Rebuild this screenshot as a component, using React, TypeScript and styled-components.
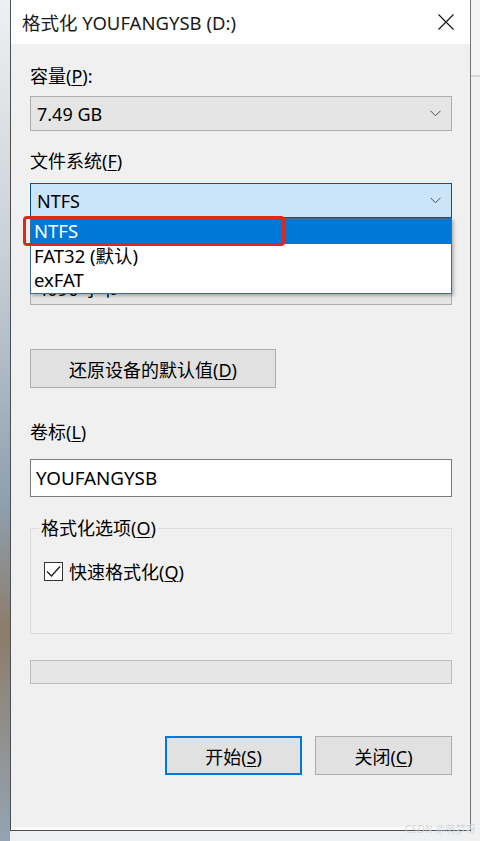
import React, { FC, ReactNode } from 'react'
import styled, { createGlobalStyle } from 'styled-components'

const GlobalStyle = createGlobalStyle`
  html, body {
    margin: 0;
    padding: 0;
    background: #eef0f1;
  }
  body {
    font-family: 'Noto Sans', 'Noto Sans CJK SC', sans-serif;
    color: #000;
  }
`

const UI_FONT = `'Noto Sans', 'Noto Sans CJK SC', sans-serif`

const Page = styled.div`
  width: 480px;
  height: 841px;
  display: flex;
  overflow: hidden;
  position: relative;
`

const Desktop = styled.div`
  width: 10px;
  background: linear-gradient(180deg, #eef0f2 0%, #c9d0d6 30%, #8f9fad 60%, #8c7c6a 75%, #95a4b1 100%);
`

const Backdrop = styled.div`
  flex: 1;
  background: linear-gradient(180deg, #f3f3f3 0 75px, #d6d6d6 75px 77px, #f0f0f0 77px);
`

const Window = styled.div`
  width: 459px;
  height: 830px;
  display: flex;
  flex-direction: column;
  border-left: 1px solid #4a4f55;
  border-right: 1px solid #6d7378;
  border-bottom: 1px solid #4a4f55;
  background: #f0f0f0;
  font-family: ${UI_FONT};
  font-size: 18px;
`

const TitleBar = styled.div`
  height: 44px;
  flex: none;
  background: #fff;
  display: flex;
  align-items: center;
  justify-content: space-between;
  padding: 0 16px 0 11px;
`

const Title = styled.span`
  font-size: 18.5px;
  color: #1a1a1a;
`

const Body = styled.div`
  flex: 1;
  display: flex;
  flex-direction: column;
  padding: 20px 18px 0 19px;
  border-bottom: 3px solid #fafafa;
`

const Label = styled.div<{ $gap: number }>`
  height: 24px;
  line-height: 24px;
  margin-bottom: ${(p) => p.$gap}px;
  white-space: nowrap;
`

const U = styled.span`
  text-decoration: underline;
  text-underline-offset: 2px;
  text-decoration-thickness: 1px;
`

const ComboWrap = styled.div<{ $after: number }>`
  position: relative;
  margin-bottom: ${(p) => p.$after}px;
`

const Combo = styled.div<{ $active?: boolean }>`
  height: 35px;
  box-sizing: border-box;
  display: flex;
  align-items: center;
  justify-content: space-between;
  padding: 0 10px 0 6px;
  background: ${(p) => (p.$active ? '#cce4f7' : '#e5e5e5')};
  border: 1px solid ${(p) => (p.$active ? '#005499' : '#adadad')};
  font-size: 18px;
`

const List = styled.div`
  position: absolute;
  top: 35px;
  left: 0;
  width: 422px;
  box-sizing: border-box;
  background: #fff;
  border: 1px solid #3f6f97;
  box-shadow: 2px 2px 3px rgba(0, 0, 0, 0.25);
  z-index: 2;
`

const Item = styled.div<{ $selected?: boolean }>`
  height: 24.5px;
  line-height: 24px;
  padding-left: 3px;
  font-size: 18.5px;
  background: ${(p) => (p.$selected ? '#0078d7' : 'transparent')};
  color: ${(p) => (p.$selected ? '#fff' : '#000')};
  white-space: nowrap;
`

const Marker = styled.div`
  position: absolute;
  top: 33px;
  left: -7px;
  width: 262px;
  height: 30px;
  box-sizing: border-box;
  border: 3px solid #e3261d;
  border-radius: 4px;
  z-index: 3;
`

const Button = styled.button<{ $default?: boolean; $width: number }>`
  width: ${(p) => p.$width}px;
  height: 39px;
  box-sizing: border-box;
  background: #e1e1e1;
  border: ${(p) => (p.$default ? '2px solid #0078d7' : '1px solid #adadad')};
  font-family: ${UI_FONT};
  font-size: 18px;
  color: #000;
  padding: 0;
`

const TextField = styled.div`
  height: 38px;
  box-sizing: border-box;
  background: #fff;
  border: 1px solid #7a7a7a;
  display: flex;
  align-items: center;
  padding-left: 5px;
  font-size: 18.8px;
  margin-bottom: 21px;
`

const Group = styled.fieldset`
  margin: 0 0 26px;
  padding: 20px 13px 0;
  height: 116px;
  box-sizing: border-box;
  border: 1px solid #dcdcdc;
  min-width: 0;
`

const Legend = styled.legend`
  padding: 0 2px;
  margin-left: -5px;
  line-height: 20px;
  font-size: 18px;
`

const CheckRow = styled.label`
  display: flex;
  align-items: center;
  gap: 6px;
`

const Box = styled.span`
  width: 19px;
  height: 19px;
  box-sizing: border-box;
  border: 1px solid #333;
  background: #fff;
  display: flex;
  align-items: center;
  justify-content: center;
`

const Progress = styled.div`
  height: 24px;
  box-sizing: border-box;
  background: #e6e6e6;
  border: 1px solid #bcbcbc;
  margin-bottom: 52px;
`

const Actions = styled.div`
  display: flex;
  justify-content: flex-end;
  gap: 13px;
`

const Watermark = styled.div`
  position: absolute;
  right: 4px;
  bottom: 5px;
  font-size: 10px;
  color: rgba(210, 214, 218, 0.9);
  font-family: ${UI_FONT};
  letter-spacing: 0.3px;
`

const Chevron: FC = () => (
  <svg width="11" height="7" viewBox="0 0 11 7">
    <path d="M0.5 0.8 L5.5 5.8 L10.5 0.8" fill="none" stroke="#4d4d4d" strokeWidth="1" />
  </svg>
)

const CloseIcon: FC = () => (
  <svg width="16" height="16" viewBox="0 0 16 16">
    <path d="M0.5 0.5 L15.5 15.5 M15.5 0.5 L0.5 15.5" stroke="#111" strokeWidth="1.1" />
  </svg>
)

const Check: FC = () => (
  <svg width="15" height="13" viewBox="0 0 15 13">
    <path d="M1 6.5 L5.5 11 L14 1.5" fill="none" stroke="#222" strokeWidth="1.4" />
  </svg>
)

const Mn: FC<{ children: ReactNode }> = ({ children }) => <U>{children}</U>

const options = ['NTFS', 'FAT32 (默认)', 'exFAT']

export default function App() {
  return (
    <>
      <GlobalStyle />
      <Page>
        <Desktop />
        <Window>
          <TitleBar>
            <Title>格式化 YOUFANGYSB (D:)</Title>
            <CloseIcon />
          </TitleBar>
          <Body>
            <Label $gap={8}>
              容量(<Mn>P</Mn>):
            </Label>
            <ComboWrap $after={18}>
              <Combo>
                <span>7.49 GB</span>
                <Chevron />
              </Combo>
            </ComboWrap>

            <Label $gap={10}>
              文件系统(<Mn>F</Mn>)
            </Label>
            <ComboWrap $after={18}>
              <Combo $active>
                <span>NTFS</span>
                <Chevron />
              </Combo>
              <List>
                {options.map((o, i) => (
                  <Item key={o} $selected={i === 0}>
                    {o}
                  </Item>
                ))}
              </List>
              <Marker />
            </ComboWrap>

            <Label $gap={10}>
              分配单元大小(<Mn>A</Mn>)
            </Label>
            <ComboWrap $after={44}>
              <Combo>
                <span>4096 字节</span>
                <Chevron />
              </Combo>
            </ComboWrap>

            <div style={{ marginBottom: 32 }}>
              <Button $width={246}>
                还原设备的默认值(<Mn>D</Mn>)
              </Button>
            </div>

            <Label $gap={15}>
              卷标(<Mn>L</Mn>)
            </Label>
            <TextField>YOUFANGYSB</TextField>

            <Group>
              <Legend>
                格式化选项(<Mn>O</Mn>)
              </Legend>
              <CheckRow>
                <Box>
                  <Check />
                </Box>
                <span>
                  快速格式化(<Mn>Q</Mn>)
                </span>
              </CheckRow>
            </Group>

            <Progress />

            <Actions>
              <Button $default $width={137}>
                开始(<Mn>S</Mn>)
              </Button>
              <Button $width={137}>
                关闭(<Mn>C</Mn>)
              </Button>
            </Actions>
          </Body>
        </Window>
        <Backdrop />
        <Watermark>CSDN @萌梦呀</Watermark>
      </Page>
    </>
  )
}
